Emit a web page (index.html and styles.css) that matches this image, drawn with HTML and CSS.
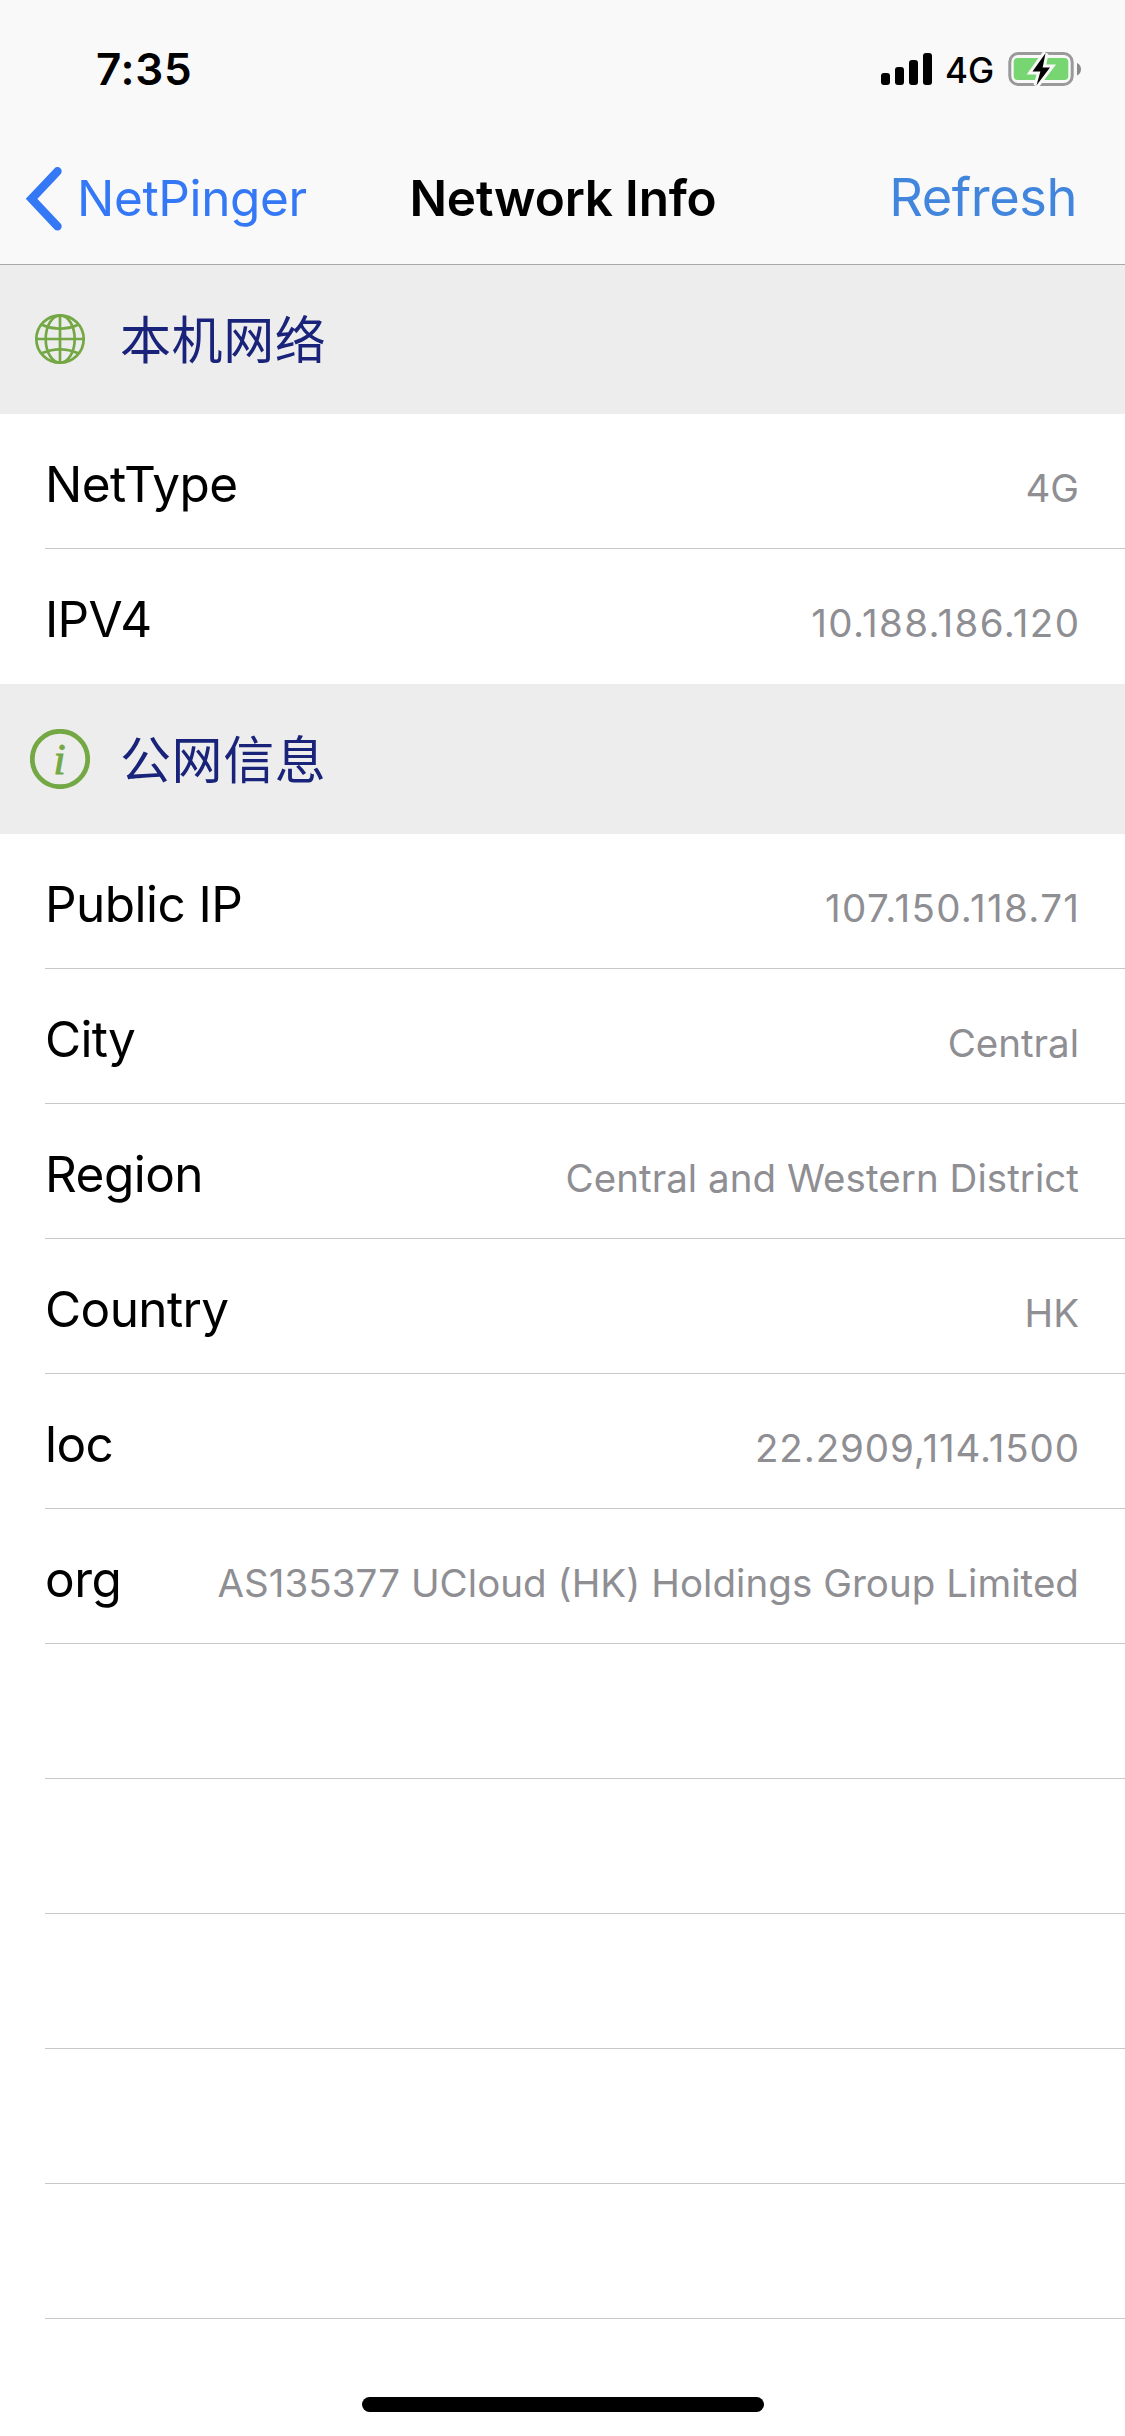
FILE: index.html
```
<!DOCTYPE html>
<html lang="en">
<head>
<meta charset="utf-8">
<meta name="viewport" content="width=device-width">
<title>Network Info</title>
<link rel="stylesheet" href="styles.css">
</head>
<body>
<div class="screen">
  <header class="topbar">
    <div class="status">
      <span class="status-time">7:35</span>
      <div class="status-right">
        <svg class="signal" width="51" height="32" viewBox="0 0 51 32" aria-hidden="true">
          <rect x="0" y="20" width="9" height="12" rx="3"/>
          <rect x="14" y="14" width="9" height="18" rx="3"/>
          <rect x="28" y="7" width="9" height="25" rx="3"/>
          <rect x="42" y="0" width="9" height="32" rx="3"/>
        </svg>
        <span class="status-carrier">4G</span>
        <svg class="battery" width="74" height="38" viewBox="0 0 74 38" aria-hidden="true">
          <rect x="1.8" y="3.5" width="62.4" height="31" rx="8.5" fill="none" stroke="#9a9a9a" stroke-width="3"/>
          <path d="M69 13c5.300 2 5.300 10.500 0 12.500z" fill="#8a8a8a"/>
          <rect x="5.700" y="8" width="54.600" height="22" rx="4" fill="#78d672"/>
          <path class="bolt" d="M37.500 3.300 24.500 21.500h7.900L28.400 35.500 42 17.500h-7.300z"/>
        </svg>
      </div>
    </div>
    <nav class="nav">
      <a class="nav-back">
        <svg class="chevron" width="36" height="64" viewBox="0 0 36 64" aria-hidden="true"><path d="M31.500 4.300 5.600 31.800 31.500 59.400"/></svg>
        <span>NetPinger</span>
      </a>
      <h1 class="nav-title">Network Info</h1>
      <a class="nav-action">Refresh</a>
    </nav>
  </header>

  <main>
    <section>
      <h2 class="group">
        <svg class="group-icon" width="60" height="60" viewBox="0 0 60 60" aria-hidden="true">
          <g fill="none" stroke="#74a845" stroke-width="2.700">
            <circle cx="30" cy="30" r="23.700"/>
            <path d="M30 6v48M6 30h48"/>
            <ellipse cx="30.200" cy="30" rx="14.500" ry="23.700"/>
            <path d="M12.300 16q17.700 7.500 35.400 0M12.300 44q17.700-7.500 35.400 0"/>
          </g>
        </svg>
        <span class="group-title" lang="zh-CN">本机网络</span>
      </h2>
      <ul class="rows">
        <li class="row"><span class="label">NetType</span><span class="value">4G</span></li>
        <li class="row row-end"><span class="label label-tight">IPV4</span><span class="value value-ip">10.188.186.120</span></li>
      </ul>
    </section>
    <section>
      <h2 class="group">
        <svg class="group-icon" width="60" height="60" viewBox="0 0 60 60" aria-hidden="true">
          <circle cx="30" cy="30" r="27.700" fill="none" stroke="#74a845" stroke-width="4.800"/>
          <text class="info-letter" x="29.500" y="44.500" text-anchor="middle">i</text>
        </svg>
        <span class="group-title" lang="zh-CN">公网信息</span>
      </h2>
      <ul class="rows">
        <li class="row"><span class="label">Public IP</span><span class="value value-ip">107.150.118.71</span></li>
        <li class="row"><span class="label label-tight">City</span><span class="value">Central</span></li>
        <li class="row"><span class="label">Region</span><span class="value value-long">Central and Western District</span></li>
        <li class="row"><span class="label label-wide">Country</span><span class="value">HK</span></li>
        <li class="row"><span class="label">loc</span><span class="value value-coords">22.2909,114.1500</span></li>
        <li class="row"><span class="label">org</span><span class="value value-long">AS135377 UCloud (HK) Holdings Group Limited</span></li>
        <li class="row"></li>
        <li class="row"></li>
        <li class="row"></li>
        <li class="row"></li>
        <li class="row"></li>
      </ul>
    </section>
  </main>

  <footer class="home"><div class="home-indicator"></div></footer>
</div>
</body>
</html>
```
FILE: styles.css
```
* { box-sizing: border-box; }

body {
  margin: 0;
  background: #fff;
  color: #000;
  font-family: Inter, "Noto Sans CJK SC", sans-serif;
}

h1, h2, ul { margin: 0; padding: 0; font-weight: 400; }
ul { list-style: none; }
svg { display: block; flex: none; }

.screen {
  display: flex;
  flex-direction: column;
  width: 1125px;
  height: 2436px;
  overflow: hidden;
}

/* Top bar; its hairline covers the first pixel row of the list. */
.topbar {
  position: relative;
  flex: none;
  height: 265px;
  margin-bottom: -1px;
  background: #f9f9f9;
  border-bottom: 1px solid #a7a7aa;
}

.status {
  display: flex;
  justify-content: space-between;
  align-items: flex-start;
  height: 132px;
  padding: 42px 43px 0 96px;
}
.status-time {
  font-size: 44px;
  line-height: 54px;
  font-weight: 600;
  letter-spacing: 0.7px;
}
.status-right { display: flex; align-items: flex-start; }
.signal { margin-top: 11px; }
.status-carrier {
  margin: 7px 14px 0 13px;
  width: 49px;
  font-size: 35px;
  line-height: 42px;
  font-weight: 450;
}
.battery { width: 74px; margin-top: 8px; }
.bolt {
  fill: #000;
  stroke: #f9f9f9;
  stroke-width: 6;
  paint-order: stroke;
}

.nav {
  display: grid;
  grid-template-columns: 1fr auto 1fr;
  align-items: baseline;
  height: 132px;
  padding-top: 33px;
  font-size: 49.5px;
  line-height: 60px;
}
.nav-back {
  display: flex;
  align-items: baseline;
  gap: 14px;
  padding-left: 27px;
  color: #3478f6;
  letter-spacing: -0.35px;
}
.chevron {
  align-self: flex-start;
  margin: -1px 1px 0 -1px;
  fill: none;
  stroke: #3478f6;
  stroke-width: 8.4;
  stroke-linecap: round;
}
.nav-title {
  padding-left: 1px;
  font-size: 49.5px;
  font-weight: 600;
  letter-spacing: -0.2px;
}
.nav-action {
  padding-right: 48px;
  text-align: right;
  color: #4185dc;
  font-size: 52.4px;
  line-height: 64px;
  letter-spacing: -0.45px;
}

.group {
  display: flex;
  align-items: center;
  gap: 30px;
  height: 150px;
  padding-left: 30px;
  background: #ededed;
}
.group-title {
  padding-bottom: 4px;
  color: #1a237a;
  font: 400 51px/74px "Noto Sans CJK SC", sans-serif;
  letter-spacing: 0.6px;
}
.info-letter {
  fill: #74a845;
  stroke: #74a845;
  stroke-width: 0.8;
  font: italic 45px "Liberation Serif", serif;
}

.row {
  display: flex;
  justify-content: space-between;
  align-items: baseline;
  height: 135px;
  margin-left: 45px;
  padding: 40px 46px 0 0;
  border-bottom: 1px solid #c8c7cc;
}
.row-end { border-bottom: 0; }
.label {
  font-size: 49.5px;
  line-height: 60px;
  letter-spacing: -0.55px;
}
.label-tight { letter-spacing: -0.75px; }
.label-wide { letter-spacing: -0.6px; }
.value {
  color: #8e8e93;
  font-size: 38.5px;
  line-height: 46px;
  white-space: nowrap;
}
.value-long { letter-spacing: 0.05px; }
.value-ip { margin-right: -1.3px; letter-spacing: 1.35px; }
.value-coords { margin-right: -1px; letter-spacing: 0.9px; }

.home {
  display: flex;
  justify-content: center;
  margin-top: auto;
  padding: 0 0 24px 1px;
}
.home-indicator {
  width: 402px;
  height: 15px;
  border-radius: 8px;
  background: #000;
}
```
